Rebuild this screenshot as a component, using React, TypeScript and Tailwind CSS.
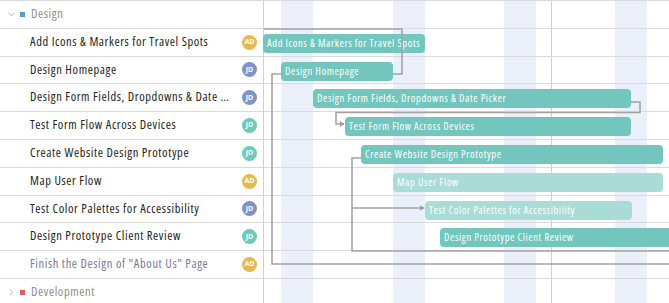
import { ChevronDown, ChevronRight } from 'lucide-react';

type Task = {
  name: string;
  who: 'AD' | 'JD' | 'JT';
  muted?: boolean;
  bar?: { left: string; width: string; light?: boolean };
};

const tasks: Task[] = [
  { name: 'Add Icons & Markers for Travel Spots', who: 'AD', bar: { left: 'left-[-1px]', width: 'w-[162px]' } },
  { name: 'Design Homepage', who: 'JD', bar: { left: 'left-[17px]', width: 'w-[112px]' } },
  { name: 'Design Form Fields, Dropdowns & Date Picker', who: 'JD', bar: { left: 'left-[49px]', width: 'w-[318px]' } },
  { name: 'Test Form Flow Across Devices', who: 'JT', bar: { left: 'left-[81px]', width: 'w-[286px]' } },
  { name: 'Create Website Design Prototype', who: 'JT', bar: { left: 'left-[97px]', width: 'w-[302px]' } },
  { name: 'Map User Flow', who: 'AD', bar: { left: 'left-[129px]', width: 'w-[270px]', light: true } },
  { name: 'Test Color Palettes for Accessibility', who: 'JD', bar: { left: 'left-[161px]', width: 'w-[207px]', light: true } },
  { name: 'Design Prototype Client Review', who: 'JT', bar: { left: 'left-[176px]', width: 'w-[300px]' } },
  { name: 'Finish the Design of "About Us" Page', who: 'AD', muted: true },
];

const avatarColor = {
  AD: 'bg-[#e5b94e]',
  JD: 'bg-[#8192c6]',
  JT: 'bg-[#6dcab8]',
};

function Avatar({ who }: { who: Task['who'] }) {
  return (
    <div className={`w-[15px] h-[15px] rounded-full flex items-center justify-center text-white text-[7px] font-bold shrink-0 ${avatarColor[who]}`}>
      {who === 'AD' ? 'AD' : 'JD'}
    </div>
  );
}

function GroupRow({ open, color, label }: { open: boolean; color: string; label: string }) {
  return (
    <div className="h-[27.8px] border-b border-[#dadada] flex items-center pl-[6px]">
      {open ? (
        <ChevronDown size={11} strokeWidth={1.6} className="text-[#9a9a9a]" />
      ) : (
        <ChevronRight size={11} strokeWidth={1.6} className="text-[#9a9a9a]" />
      )}
      <div className={`w-[5px] h-[5px] ml-[3px] ${color}`} />
      <span className="ml-[6px] text-[12.5px] tracking-[0.6px] text-[#8c8c8c] font-stretch-condensed">{label}</span>
    </div>
  );
}

export default function App() {
  return (
    <div className="w-[669px] h-[303px] overflow-hidden bg-white border-t border-[#dadada] flex font-['Open_Sans',sans-serif]">
      <div className="w-[264px] shrink-0 border-r border-[#d0d0d0]">
        <GroupRow open color="bg-[#5b9bd5]" label="Design" />
        {tasks.map((t) => (
          <div key={t.name} className="h-[27.8px] border-b border-[#dadada] flex items-center pl-[30px] pr-[6px]">
            <span
              className={`flex-1 min-w-0 truncate text-[12.5px] tracking-[0.6px] font-stretch-condensed pr-[10px] ${t.muted ? 'text-[#7d74a3]' : 'text-[#222]'}`}
            >
              {t.name}
            </span>
            <Avatar who={t.who} />
          </div>
        ))}
        <GroupRow open={false} color="bg-[#e05a5a]" label="Development" />
      </div>

      <div className="relative flex-1">
        <div className="absolute top-0 bottom-0 left-[17px] w-[32px] bg-[#ebeff9]" />
        <div className="absolute top-0 bottom-0 left-[129px] w-[32px] bg-[#ebeff9]" />
        <div className="absolute top-0 bottom-0 left-[240px] w-[32px] bg-[#ebeff9]" />
        <div className="absolute top-0 bottom-0 left-[351px] w-[32px] bg-[#ebeff9]" />
        <div className="absolute top-0 bottom-0 left-[287px] w-px bg-[#cfcfcf]" />

        <div className="relative h-[27.8px] border-b border-[#dadada]" />
        {tasks.map((t) => (
          <div key={t.name} className="relative h-[27.8px] border-b border-[#dadada]">
            {t.bar && (
              <div
                className={`absolute top-[5px] h-[19px] rounded-[4px] pl-[4px] text-[10.5px] tracking-[0.6px] font-stretch-condensed leading-[19px] text-white whitespace-nowrap overflow-hidden ${t.bar.left} ${t.bar.width} ${t.bar.light ? 'bg-[#a9dcd6]' : 'bg-[#72c6bd]'}`}
              >
                {t.name}
              </div>
            )}
          </div>
        ))}
        <div className="relative h-[27.8px] border-b border-[#dadada]" />

        <svg className="absolute inset-0 pointer-events-none" width="405" height="303">
          <defs>
            <marker id="arr" markerWidth="5" markerHeight="6" refX="4.5" refY="3" orient="auto" markerUnits="userSpaceOnUse">
              <path d="M0 0 L5 3 L0 6 Z" fill="#9c9c9c" />
            </marker>
          </defs>
          <g fill="none" stroke="#a3a3a3" strokeWidth="1.6">
            <path d="M -1 28 H 138 V 73 H 129" />
            <path d="M 17 73 H 8 V 263 H 410" />
            <path d="M 367 101 H 376 V 111.5 H 72 V 123 H 80" markerEnd="url(#arr)" />
            <path d="M 97 157 H 88 V 250 H 410" />
            <path d="M 88 207 H 160" markerEnd="url(#arr)" />
          </g>
        </svg>
      </div>
    </div>
  );
}
